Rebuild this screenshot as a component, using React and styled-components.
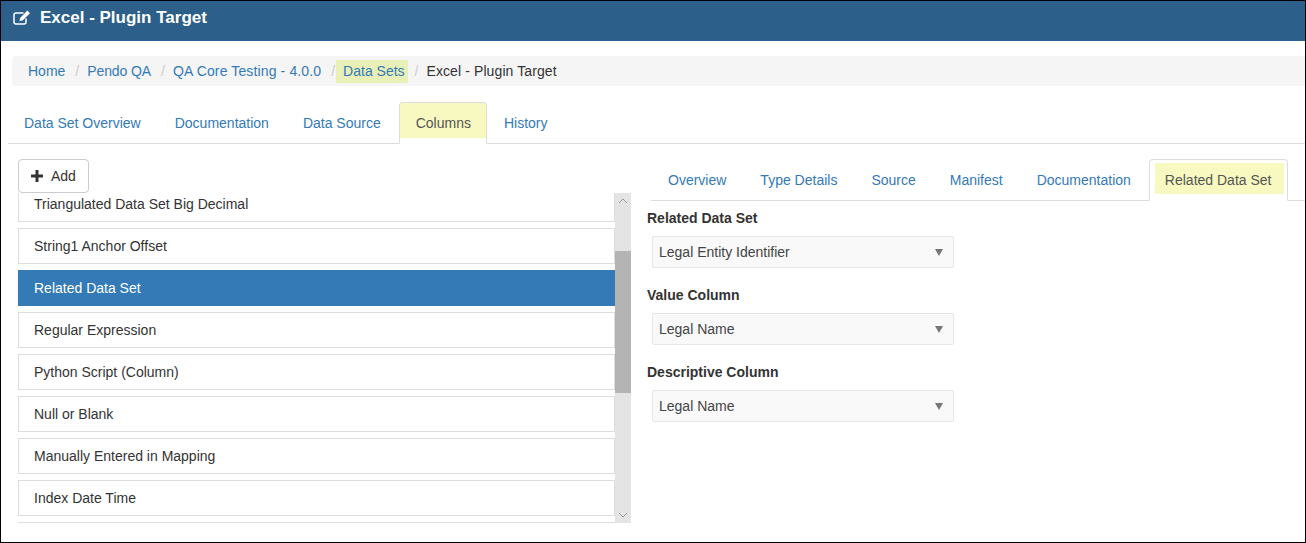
import React from "react";
import styled, { createGlobalStyle } from "styled-components";

const GlobalStyle = createGlobalStyle`
  html, body { margin: 0; padding: 0; background: #fff; }
  body { font-family: "Liberation Sans", Arial, sans-serif; font-size: 14px; color: #333; }
  * { box-sizing: border-box; }
`;

const Page = styled.div`
  width: 1306px;
  height: 543px;
  border: 1px solid #000;
  overflow: hidden;
  background: #fff;
`;

const Header = styled.div`
  height: 40px;
  background: #2c5f8a;
  color: #fff;
  display: flex;
  align-items: center;
  gap: 9px;
  padding: 0 0 6px 12px;
  font-size: 17px;
  font-weight: bold;
`;

const EditIcon = styled.svg`
  margin-bottom: 1px;
`;

const Crumbs = styled.div`
  margin: 15px 0 0 11px;
  height: 30px;
  background: #f5f5f5;
  border-radius: 4px 0 0 4px;
  display: flex;
  align-items: center;
  padding-left: 16px;
`;

const Crumb = styled.a`
  color: ${(p) => (p.$current ? "#333" : "#337ab7")};
  letter-spacing: ${(p) => p.$track || 0}px;
  white-space: nowrap;
`;

const HighlightCrumb = styled(Crumb)`
  background: #e8f0b8;
  color: #337ab7;
  height: 23px;
  line-height: 23px;
  padding: 0 3px 0 7px;
  margin-left: -7px;
  margin-right: -3px;
`;

const Sep = styled.span`
  color: #ccc;
  padding: 0 8px 0 10px;
`;

const TabBar = styled.div`
  display: flex;
  align-items: flex-end;
  border-bottom: 1px solid #ddd;
  margin-left: ${(p) => p.$left}px;
  height: ${(p) => p.$height}px;
  margin-top: ${(p) => p.$top}px;
`;

const Tab = styled.a`
  display: block;
  height: 41px;
  line-height: 38px;
  padding: 0 ${(p) => p.$right || 16}px 0 ${(p) => p.$pad || 16}px;
  margin-bottom: -1px;
  color: #337ab7;
  white-space: nowrap;
  border: 1px solid transparent;
`;

const ActiveTab = styled(Tab)`
  color: #555;
  height: 42px;
  line-height: 40px;
  background: linear-gradient(#f8f9c0, #f8f9c0 35px, #fff 35px);
  border: 1px solid #ddd;
  border-bottom-color: #fff;
  border-radius: 4px 4px 0 0;
`;

const InnerActiveTab = styled.a`
  display: block;
  height: 42px;
  margin-bottom: -1px;
  margin-left: 1px;
  padding: 3px 3px 0 5px;
  background: #fff;
  border: 1px solid #ddd;
  border-bottom-color: #fff;
  border-radius: 4px 4px 0 0;
  color: #555;
  white-space: nowrap;
`;

const InnerYellow = styled.span`
  display: block;
  height: 31px;
  line-height: 35px;
  padding: 0 13px 0 10px;
  background: #f8f9c0;
`;

const Body = styled.div`
  display: grid;
  grid-template-columns: 630px 1fr;
`;

const LeftCol = styled.div`
  padding: 15px 0 0 17px;
`;

const AddButton = styled.button`
  display: flex;
  align-items: center;
  gap: 8px;
  width: 71px;
  height: 34px;
  padding: 0 0 0 12px;
  border: 1px solid #ccc;
  border-radius: 4px;
  background: #fff;
  color: #333;
  font: inherit;
`;

const ListArea = styled.div`
  display: flex;
  height: 330px;
`;

const List = styled.div`
  width: 597px;
  overflow: hidden;
  display: flex;
  flex-direction: column;
  gap: 6px;
`;

const Row = styled.div`
  flex: none;
  height: 36px;
  line-height: 34px;
  padding-left: 15px;
  border: 1px solid ${(p) => (p.$active ? "#337ab7" : "#ddd")};
  background: ${(p) => (p.$active ? "#337ab7" : "#fff")};
  color: ${(p) => (p.$active ? "#fff" : "#333")};
  &:first-child { margin-top: -7px; }
`;

const Track = styled.div`
  width: 16px;
  background: #e4e4e4;
  display: flex;
  flex-direction: column;
  align-items: center;
  position: relative;
`;

const Thumb = styled.div`
  width: 16px;
  height: 142px;
  margin-top: 58px;
  background: #b4b4b4;
`;

const ArrowIcon = styled.svg`
  position: absolute;
  left: 3px;
  ${(p) => (p.$down ? "bottom: 5px;" : "top: 5px;")}
`;

const RightCol = styled.div`
  padding-top: 15px;
  padding-left: 16px;
`;

const Form = styled.div`
  display: flex;
  flex-direction: column;
`;

const Label = styled.div`
  font-weight: bold;
  font-size: 14px;
  color: #333;
  height: 16px;
  line-height: 16px;
  margin-top: ${(p) => p.$top}px;
`;

const Select = styled.div`
  width: 302px;
  height: 32px;
  margin: 10px 0 0 5px;
  background: #f9f9f9;
  border: 1px solid #e6e6e6;
  border-radius: 2px;
  display: flex;
  align-items: center;
  justify-content: space-between;
  padding: 0 10px 0 6px;
  color: #444;
`;

const Caret = styled.span`
  width: 0;
  height: 0;
  border-left: 4px solid transparent;
  border-right: 4px solid transparent;
  border-top: 7px solid #777;
`;

const rows = [
  "Triangulated Data Set Big Decimal",
  "String1 Anchor Offset",
  "Related Data Set",
  "Regular Expression",
  "Python Script (Column)",
  "Null or Blank",
  "Manually Entered in Mapping",
  "Index Date Time",
  "",
];

const fields = [
  { label: "Related Data Set", value: "Legal Entity Identifier", top: 9 },
  { label: "Value Column", value: "Legal Name", top: 19 },
  { label: "Descriptive Column", value: "Legal Name", top: 19 },
];

export default function App() {
  return (
    <Page>
      <GlobalStyle />
      <Header>
        <EditIcon width="18" height="15" viewBox="0 0 18 15" fill="none">
          <path d="M13 8.5V12a2 2 0 0 1-2 2H3a2 2 0 0 1-2-2V5a2 2 0 0 1 2-2h7.5" stroke="#fff" strokeWidth="1.5" />
          <path d="M6.5 11l.6-3L14.3.6 17 3.2 9.6 10.5z" fill="#fff" />
        </EditIcon>
        Excel - Plugin Target
      </Header>

      <Crumbs>
        <Crumb>Home</Crumb>
        <Sep>/</Sep>
        <Crumb $track={-0.1}>Pendo QA</Crumb>
        <Sep>/</Sep>
        <Crumb $track={0.13}>QA Core Testing - 4.0.0</Crumb>
        <Sep>/</Sep>
        <HighlightCrumb>Data Sets</HighlightCrumb>
        <Sep>/</Sep>
        <Crumb $current $track={0.1}>Excel - Plugin Target</Crumb>
      </Crumbs>

      <TabBar $left={7} $height={42} $top={16}>
        <Tab $pad={15} $right={16}>Data Set Overview</Tab>
        <Tab>Documentation</Tab>
        <Tab $right={17}>Data Source</Tab>
        <ActiveTab $right={15}>Columns</ActiveTab>
        <Tab>History</Tab>
      </TabBar>

      <Body>
        <LeftCol>
          <AddButton>
            <svg width="12" height="12" viewBox="0 0 12 12">
              <path d="M4.5 0h3v4.5H12v3H7.5V12h-3V7.5H0v-3h4.5z" fill="#333" />
            </svg>
            Add
          </AddButton>
          <ListArea>
            <List>
              {rows.map((name, i) => (
                <Row key={i} $active={name === "Related Data Set"}>
                  {name}
                </Row>
              ))}
            </List>
            <Track>
              <ArrowIcon width="10" height="6" viewBox="0 0 10 6" fill="none">
                <path d="M1 5l4-4 4 4" stroke="#999" />
              </ArrowIcon>
              <Thumb />
              <ArrowIcon $down width="10" height="6" viewBox="0 0 10 6" fill="none">
                <path d="M1 1l4 4 4-4" stroke="#999" />
              </ArrowIcon>
            </Track>
          </ListArea>
        </LeftCol>

        <RightCol>
          <TabBar $left={4} $height={42} $top={0}>
            <Tab>Overview</Tab>
            <Tab>Type Details</Tab>
            <Tab>Source</Tab>
            <Tab>Manifest</Tab>
            <Tab>Documentation</Tab>
            <InnerActiveTab>
              <InnerYellow>Related Data Set</InnerYellow>
            </InnerActiveTab>
          </TabBar>
          <Form>
            {fields.map((f) => (
              <React.Fragment key={f.label}>
                <Label $top={f.top}>{f.label}</Label>
                <Select>
                  {f.value}
                  <Caret />
                </Select>
              </React.Fragment>
            ))}
          </Form>
        </RightCol>
      </Body>
    </Page>
  );
}
